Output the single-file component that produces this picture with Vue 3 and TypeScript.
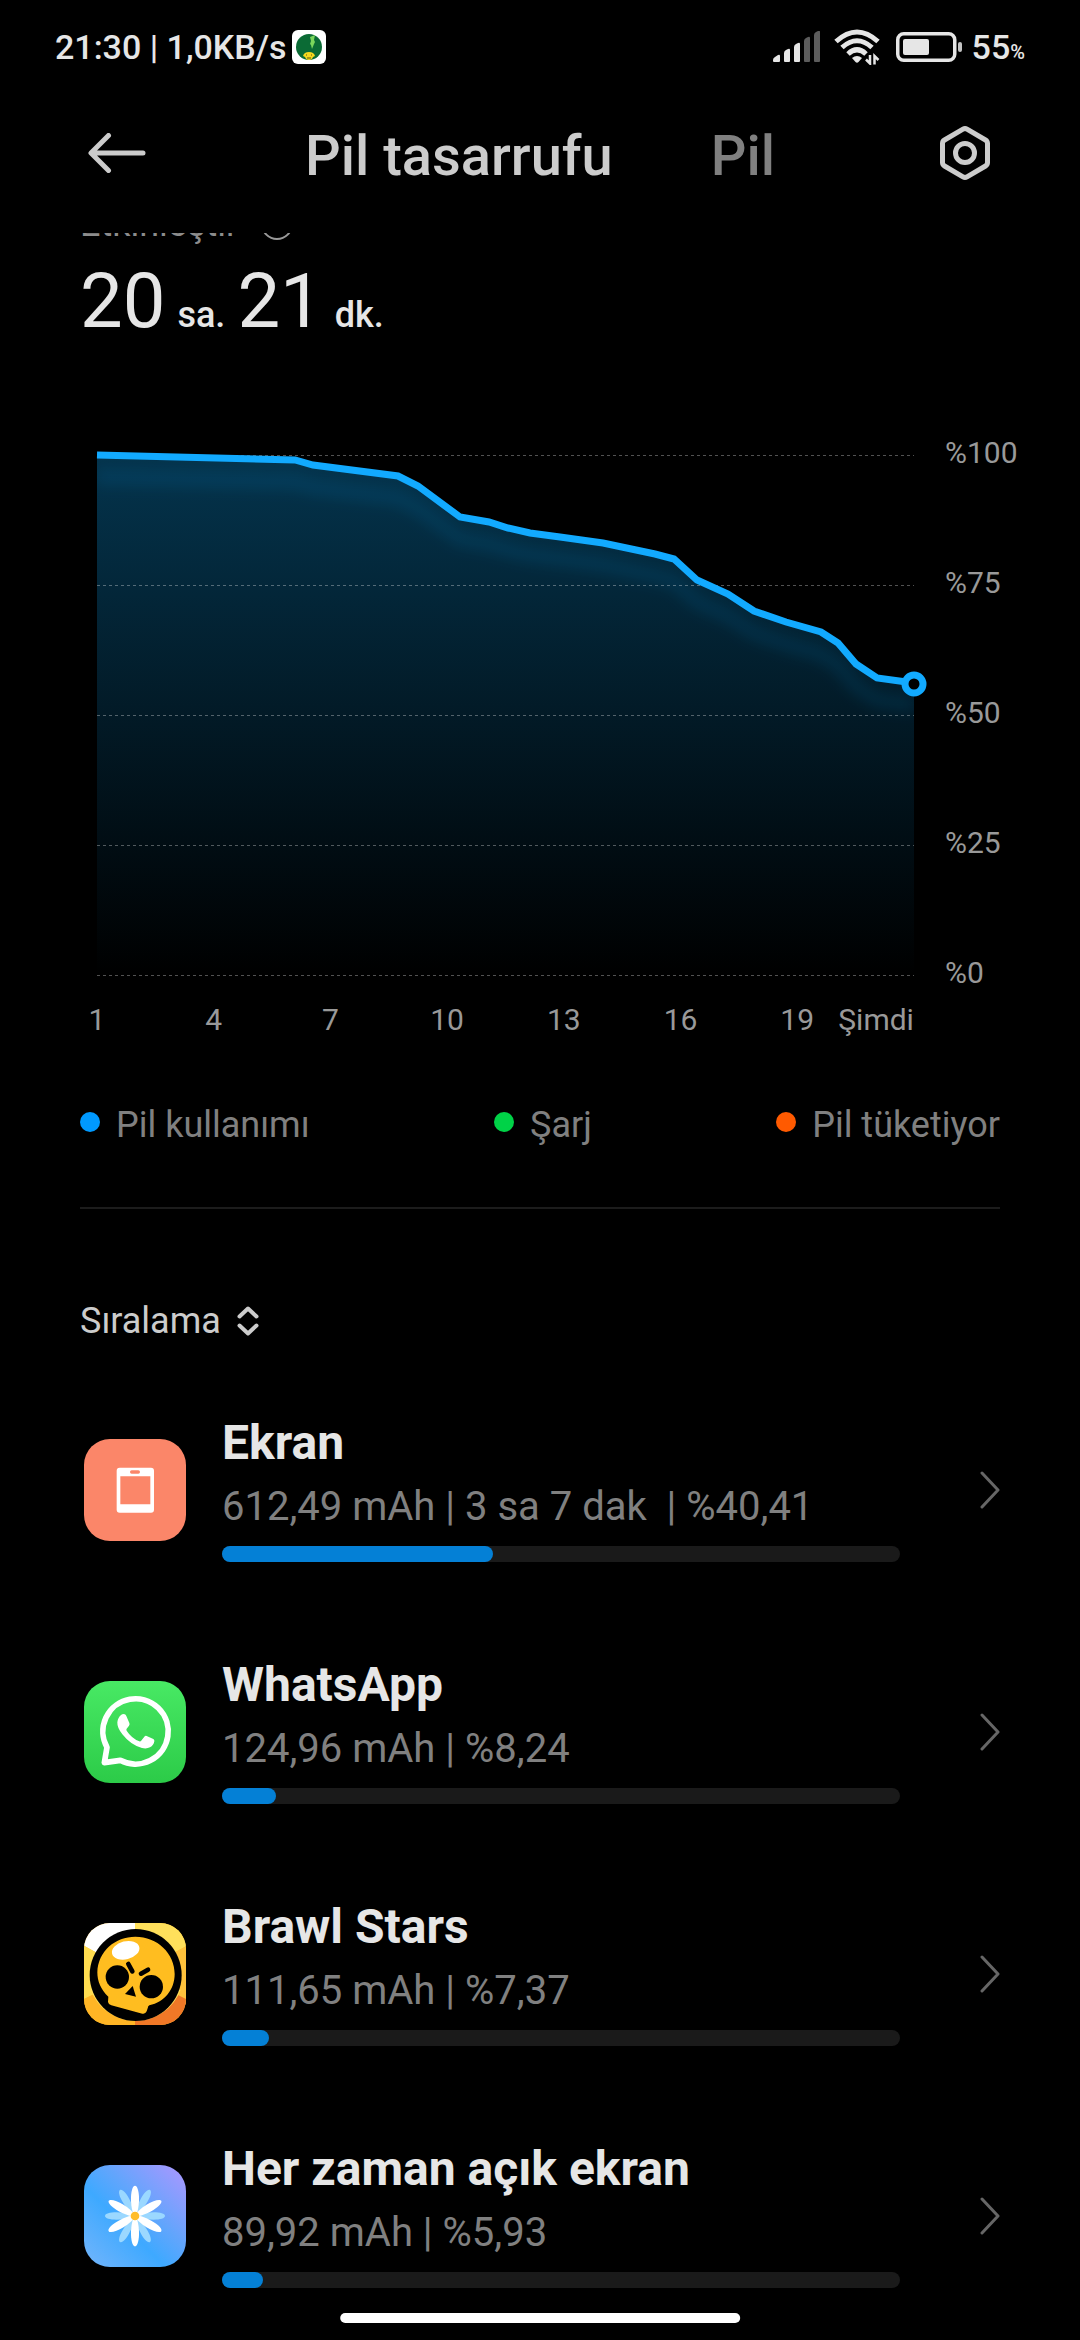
<script setup lang="ts">
interface Consumer {
  id: string
  name: string
  detail: string
  share: number
}

const consumers: Consumer[] = [
  { id: 'screen', name: 'Ekran', detail: '612,49 mAh | 3 sa 7 dak  | %40,41', share: 40 },
  { id: 'whatsapp', name: 'WhatsApp', detail: '124,96 mAh | %8,24', share: 8 },
  { id: 'brawl', name: 'Brawl Stars', detail: '111,65 mAh | %7,37', share: 7 },
  { id: 'aod', name: 'Her zaman açık ekran', detail: '89,92 mAh | %5,93', share: 6 },
]

const hours = ['1', '4', '7', '10', '13', '16', '19', 'Şimdi']
const levels = ['%100', '%75', '%50', '%25', '%0']
const gridLines = [0, 130, 260, 390, 520]

const legend = [
  { label: 'Pil kullanımı', tone: 'blue' },
  { label: 'Şarj', tone: 'green' },
  { label: 'Pil tüketiyor', tone: 'orange' },
]

const points: [number, number][] = [
  [0, 0], [198, 5], [216, 10], [301, 21], [321, 31], [363, 62], [392, 67],
  [411, 73], [433, 78], [463, 82], [506, 88], [558, 99], [577, 104], [600, 125],
  [631, 139], [657, 156], [689, 167], [724, 177], [741, 188], [759, 209],
  [780, 223], [817, 228],
]
const line = 'M' + points.map((p) => p.join(' ')).join('L')
const area = `${line}V520H0Z`

const petals = [0, 60, 120, 180, 240, 300]
</script>

<template>
  <div class="screen">
    <div class="status">
      <div class="status-side">
        <span>21:30 | 1,0KB/s</span>
        <svg class="notif" viewBox="0 0 34 34" aria-hidden="true">
          <rect width="34" height="34" rx="6" fill="#fff" />
          <circle cx="17" cy="17" r="13" fill="#0b6b35" />
          <path d="M18 7l5-2-1 5 1 2-1 2-2 5-1-4-1-1 1-3z" fill="#7bd65c" />
          <path d="M11 26q1-4 6-4t6 4l-2 1q-1 3-4 3t-4-3z" fill="#f5d81f" />
          <path d="M14 25h1M19 25h1M15 28h4" stroke="#5b5510" />
        </svg>
      </div>
      <div class="status-side">
        <svg class="signal" viewBox="0 0 48 32" aria-hidden="true">
          <g fill="#e6e6e6">
            <path d="M0 29q0-2 2-3l3-2q2-1 2 1v5q0 1-1 1H1q-1 0-1-1z" />
            <path d="M11 22q0-2 2-3l2-1q2-1 2 1v11q0 1-1 1h-4q-1 0-1-1z" />
            <path d="M21 16q0-2 2-3l2-1q2-1 2 1v17q0 1-1 1h-4q-1 0-1-1z" />
          </g>
          <g fill="#5c5c5c">
            <path d="M31 10q0-2 2-3l2-1q2-1 2 1v23q0 1-1 1h-4q-1 0-1-1z" />
            <path d="M41 4q0-2 2-3l2-1q2-1 2 1v29q0 1-1 1h-4q-1 0-1-1z" />
          </g>
        </svg>
        <svg class="wifi" viewBox="0 0 46 36" aria-hidden="true">
          <g fill="none" stroke="#e6e6e6" stroke-width="5">
            <path d="M2 12.500Q23-6.500 44 12.500" />
            <path d="M8 18.500Q23 5 38 18.500" />
            <path d="M14 25Q23 16.500 32 25" />
          </g>
          <path d="M18 29q5-4 10 0l-3.500 4q-1.500 1.500-3 0z" fill="#e6e6e6" />
          <path d="M36 26v8.500l-4-4M40.500 35.500V27l4 4" fill="none" stroke="#e6e6e6" stroke-width="2.500" />
        </svg>
        <svg class="battery" viewBox="0 0 66 30" aria-hidden="true">
          <rect x="1.750" y="1.750" width="57" height="26.500" rx="6" fill="none" stroke="#e6e6e6" stroke-width="3.500" />
          <rect x="7" y="7" width="26" height="16" rx="2" fill="#e6e6e6" />
          <rect x="62" y="10" width="4" height="10" rx="2" fill="#c4c4c4" />
        </svg>
        <span class="charge">55<small>%</small></span>
      </div>
    </div>

    <header class="bar">
      <button class="icon-button back" type="button" aria-label="Geri">
        <svg viewBox="0 0 58 40" width="58" height="40" aria-hidden="true">
          <path d="M20.500 2.500L3 20l17.500 17.500M3.500 20H55" fill="none" stroke="#ccc" stroke-width="5" stroke-linecap="round" stroke-linejoin="round" />
        </svg>
      </button>
      <nav class="tabs" role="tablist">
        <button type="button" role="tab" aria-selected="true" class="tab active">Pil tasarrufu</button>
        <button type="button" role="tab" aria-selected="false" class="tab">Pil</button>
      </nav>
      <button class="icon-button settings" type="button" aria-label="Ayarlar">
        <svg viewBox="0 0 54 56" width="54" height="56" aria-hidden="true">
          <g fill="none" stroke="#ccc" stroke-width="5" stroke-linejoin="round">
            <path d="M25 4.200q2-1.200 4 0l18.500 10.800q2 1.200 2 3.500v19q0 2.300-2 3.500L29 51.800q-2 1.200-4 0L6.500 41q-2-1.200-2-3.500v-19q0-2.300 2-3.500z" />
            <circle cx="27" cy="28" r="9.500" />
          </g>
        </svg>
      </button>
    </header>

    <main>
      <div class="peek">
        <span>Etkinleştir</span>
        <svg viewBox="0 0 54 54" width="54" height="54" aria-hidden="true">
          <circle cx="27" cy="27" r="15" fill="none" stroke="#999" stroke-width="2" />
        </svg>
      </div>
      <p class="elapsed">
        <span class="num">20</span><span class="unit">sa.</span><span class="num">21</span><span class="unit">dk.</span>
      </p>

      <section class="chart">
        <div class="plot">
          <svg viewBox="0 0 817 520" aria-hidden="true">
            <defs>
              <linearGradient id="fill" x1="0" y1="0" x2="0" y2="520" gradientUnits="userSpaceOnUse">
                <stop offset="0" stop-color="#04344d" />
                <stop offset="1" stop-color="#000" />
              </linearGradient>
              <clipPath id="under"><path :d="area" /></clipPath>
              <filter id="soft" x="-10%" y="-30%" width="120%" height="160%">
                <feGaussianBlur stdDeviation="7" />
              </filter>
            </defs>
            <path :d="area" fill="url(#fill)" />
            <g clip-path="url(#under)">
              <path :d="line" transform="translate(0 22)" fill="none" stroke="#12aaff" stroke-opacity=".1" stroke-width="14" filter="url(#soft)" />
            </g>
            <path
              v-for="y in gridLines" :key="y" :d="`M0 ${y}.500H817`"
              stroke="#fff" stroke-opacity=".32" stroke-width="1" stroke-dasharray="3 3"
            />
            <path :d="line" fill="none" stroke="#12aaff" stroke-width="7" />
            <circle cx="817" cy="229" r="9" fill="#000" stroke="#12aaff" stroke-width="7" />
          </svg>
          <div class="hours">
            <span v-for="h in hours" :key="h">{{ h }}</span>
          </div>
        </div>
        <div class="levels">
          <span v-for="l in levels" :key="l">{{ l }}</span>
        </div>
      </section>

      <ul class="legend">
        <li v-for="item in legend" :key="item.label">
          <i :class="item.tone"></i>{{ item.label }}
        </li>
      </ul>

      <hr />

      <button class="sort" type="button">
        Sıralama
        <svg viewBox="0 0 22 30" width="22" height="30" aria-hidden="true">
          <path d="M2.500 10.500L11 2.500l8.500 8M2.500 19.500L11 27.500l8.500-8" fill="none" stroke="#ccc" stroke-width="4" stroke-linecap="round" stroke-linejoin="round" />
        </svg>
      </button>

      <ul class="list">
        <li v-for="c in consumers" :key="c.id">
          <a href="#" class="row">
            <svg class="app" viewBox="0 0 306 306" aria-hidden="true">
              <template v-if="c.id === 'screen'">
                <rect width="306" height="306" fill="#fb8669" />
                <path fill="#fff" fill-rule="evenodd" d="M107 86h94q9 0 9 9v117q0 9-9 9h-94q-9 0-9-9V95q0-9 9-9zM109 112v84h90v-84zM143 94q-5 0-5 5t5 5h20q5 0 5-5t-5-5z" />
              </template>
              <template v-else-if="c.id === 'whatsapp'">
                <defs>
                  <linearGradient id="wa" x1="0" y1="0" x2="0" y2="1">
                    <stop offset="0" stop-color="#48e964" />
                    <stop offset="1" stop-color="#2ccb48" />
                  </linearGradient>
                </defs>
                <rect width="306" height="306" fill="url(#wa)" />
                <path d="M69 199A98 98 0 1 1 109 238L61 245Z" fill="none" stroke="#fff" stroke-width="17" stroke-linejoin="round" />
                <path d="M112 101q5-3 10-1 3 1 5 5l9 21q2 4-1 8l-7 9q-2 3 0 6 14 22 38 32 3 1 5-1l10-13q3-4 7-2l20 9q4 2 3 7-2 12-13 18-10 5-24 2-33-8-59-41-16-20-15-36 1-14 12-23z" fill="#fff" />
              </template>
              <template v-else-if="c.id === 'brawl'">
                <rect width="306" height="306" fill="#ffc02e" />
                <path d="M0 0H153V153L0 68z" fill="#fff" />
                <path d="M153 0H306V70L153 153z" fill="#ffe05b" />
                <path d="M0 68L153 153 0 228z" fill="#ffdc4f" />
                <path d="M306 70V245L153 153z" fill="#ffc23c" />
                <path d="M0 228L153 153V306H0z" fill="#ffb525" />
                <path d="M306 228V306H153V153z" fill="#f07827" />
                <path d="M20 200A144 144 0 0 0 290 200z" fill="#ffe05b" />
                <circle cx="155" cy="156" r="138" fill="#000" />
                <path d="M73 221C50 200 40 174 40 148 42 84 94 41 154 41c66 0 118 50 118 112 0 46-30 84-76 94q-4 1-5 9l-3 9q-4 9-13 7L82 247q-9-3-10-10z" fill="#ffbd20" />
                <ellipse cx="125" cy="82" rx="42" ry="27" transform="rotate(-14 125 82)" fill="#fff" />
                <circle cx="100" cy="162" r="35" fill="#000" />
                <circle cx="202" cy="191" r="35" fill="#000" />
                <path d="M146 189L123 213 156 221z" fill="#000" />
                <path d="M133 123L145 145M171 152L192 140" stroke="#000" stroke-width="14" stroke-linecap="round" />
              </template>
              <template v-else>
                <defs>
                  <linearGradient id="sky" x1="0" y1="1" x2="1" y2="0">
                    <stop offset="0" stop-color="#74b5fb" />
                    <stop offset=".4" stop-color="#3ea9ff" />
                    <stop offset=".6" stop-color="#62a5fc" />
                    <stop offset="1" stop-color="#ae96ff" />
                  </linearGradient>
                </defs>
                <rect width="306" height="306" fill="url(#sky)" />
                <path
                  v-for="a in petals" :key="'b' + a" :transform="`rotate(${a + 30} 153 153)`"
                  d="M153 153C138 120 139 63 153 63S168 120 153 153z" fill="#9bd8ff"
                />
                <path
                  v-for="a in petals" :key="'f' + a" :transform="`rotate(${a} 153 153)`"
                  d="M153 160C134 120 140 62 153 62S172 120 153 160z" fill="#fff"
                />
                <circle cx="153" cy="153" r="13" fill="#ffbd2b" />
              </template>
            </svg>
            <span class="info">
              <span class="name">{{ c.name }}</span>
              <span class="detail">{{ c.detail }}</span>
              <span class="track"><span class="value" :style="{ width: c.share + '%' }"></span></span>
            </span>
            <svg class="chevron" viewBox="0 0 20 38" aria-hidden="true">
              <path d="M2 2L18 19 2 36" fill="none" stroke="#666" stroke-width="3" stroke-linecap="round" stroke-linejoin="round" />
            </svg>
          </a>
        </li>
      </ul>
    </main>
    <div class="home"></div>
  </div>
</template>

<style>
body {
  background: #000;
}
</style>

<style scoped>
.screen {
  min-height: 100vh;
  background: #000;
  color: #e6e6e6;
  font-family: Roboto, "Noto Sans", sans-serif;
}
button {
  padding: 0;
  border: 0;
  background: none;
  font: inherit;
  color: inherit;
}
ul {
  margin: 0;
  padding: 0;
  list-style: none;
}
svg {
  display: block;
  flex: none;
}
.status {
  display: flex;
  justify-content: space-between;
  align-items: center;
  height: 94px;
  padding: 0 55px;
  font-size: 34px;
  font-weight: 500;
}
.status-side {
  display: flex;
  align-items: center;
}
.notif {
  width: 34px;
  height: 34px;
  margin-left: 5px;
}
.signal {
  width: 48px;
  height: 32px;
}
.wifi {
  width: 46px;
  height: 36px;
  margin-left: 13px;
}
.battery {
  width: 66px;
  height: 30px;
  margin: 0 10px 0 16px;
}
.charge small {
  font-size: 20px;
}
.bar {
  display: grid;
  grid-template-columns: 1fr auto 1fr;
  align-items: center;
  height: 118px;
  margin-bottom: 21px;
  padding: 0 88px;
}
.icon-button {
  justify-self: start;
}
.settings {
  justify-self: end;
}
.tabs {
  display: flex;
  gap: 98px;
  padding-top: 6px;
}
.tab {
  font-size: 56px;
  font-weight: 500;
  line-height: 72px;
  color: #808080;
}
.tab.active {
  color: #ccc;
}
.peek {
  display: flex;
  align-items: flex-end;
  gap: 12px;
  height: 18px;
  padding: 0 80px;
  overflow: hidden;
  font-size: 36px;
  line-height: 54px;
  color: #8c8c8c;
}
.elapsed {
  display: flex;
  align-items: baseline;
  margin: 4px 80px 0;
}
.num {
  font-size: 76px;
  line-height: 92px;
}
.unit {
  margin: 0 12px;
  font-size: 36px;
  font-weight: 500;
  line-height: 48px;
}
.chart {
  display: flex;
  gap: 31px;
  margin-top: 108px;
  padding-left: 97px;
  font-size: 30px;
  line-height: 36px;
  color: #999;
}
.plot {
  flex: 1;
}
.plot svg {
  width: 100%;
  overflow: visible;
}
.hours {
  display: flex;
  justify-content: space-between;
  margin-top: 27px;
}
.hours span {
  display: flex;
  justify-content: center;
  width: 0;
}
.hours span:last-child {
  justify-content: flex-end;
}
.levels {
  display: flex;
  flex-direction: column;
  justify-content: space-between;
  width: 135px;
  margin: -20px 0 47px;
}
.legend {
  display: flex;
  justify-content: space-between;
  margin: 63px 80px 0;
  font-size: 36px;
  line-height: 48px;
  color: #808080;
}
.legend li {
  display: flex;
  align-items: center;
  gap: 16px;
}
.legend i {
  width: 20px;
  height: 20px;
  margin-bottom: 6px;
  border-radius: 50%;
}
.blue {
  background: #0099ff;
}
.green {
  background: #00d247;
}
.orange {
  background: #ff5a00;
}
hr {
  height: 2px;
  margin: 58px 80px 0;
  border: 0;
  background: #1c1c1c;
}
.sort {
  display: flex;
  align-items: center;
  gap: 16px;
  margin: 88px 80px 24px;
  font-size: 36px;
  line-height: 48px;
  color: #ccc;
}
.row {
  display: flex;
  align-items: center;
  height: 242px;
  padding: 0 80px 0 84px;
  color: inherit;
  text-decoration: none;
}
.app {
  width: 102px;
  height: 102px;
  margin-right: 36px;
  border-radius: 26px;
}
.info {
  display: flex;
  flex: 1;
  flex-direction: column;
  padding-bottom: 7px;
  line-height: 64px;
}
.name {
  font-size: 48px;
  font-weight: 700;
}
.detail {
  font-size: 40px;
  color: #808080;
  white-space: pre;
}
.track {
  height: 16px;
  margin-top: 7px;
  border-radius: 8px;
  background: #1a1a1a;
}
.value {
  display: block;
  height: 100%;
  border-radius: 8px;
  background: #0480d6;
}
.chevron {
  width: 20px;
  height: 38px;
  margin-left: 80px;
}
.home {
  position: fixed;
  bottom: 17px;
  left: 50%;
  width: 37%;
  height: 10px;
  border-radius: 5px;
  background: #fff;
  transform: translateX(-50%);
}
</style>
